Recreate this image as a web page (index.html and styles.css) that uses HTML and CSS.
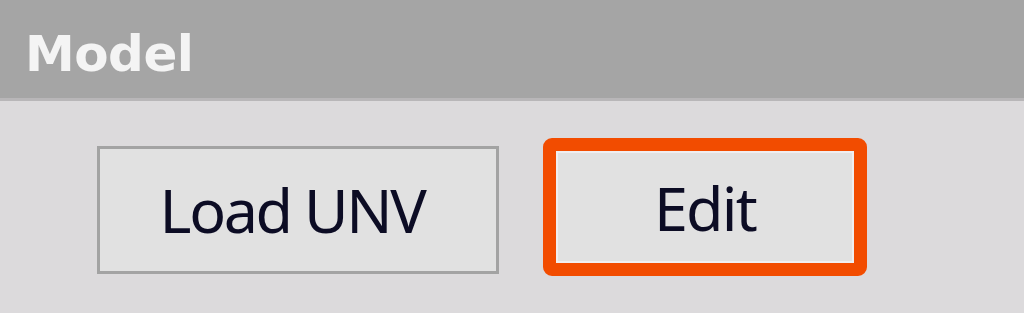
FILE: index.html
```html
<!DOCTYPE html>
<html>
<head>
<meta charset="utf-8">
<link rel="stylesheet" href="styles.css">
</head>
<body>
<div class="header"><span class="title">Model</span></div>
<div class="content">
  <button class="btn load">Load UNV</button>
  <div class="highlight"><button class="btn edit">Edit</button></div>
</div>
</body>
</html>
```
FILE: styles.css
```css
html, body {
  margin: 0;
  padding: 0;
  background: #dcdadc;
  width: 1024px;
  height: 313px;
  overflow: hidden;
}
.header {
  background: #a5a5a5;
  border-bottom: 3px solid #b8b6b8;
  padding-left: 25px;
  display: flex;
  align-items: center;
  box-sizing: border-box;
  height: 101px;
}
.title {
  font-family: "DejaVu Sans", sans-serif;
  font-weight: bold;
  font-size: 50px;
  color: #f4f4f4;
  margin-top: 10px;
  letter-spacing: -0.5px;
}
.content {
  display: flex;
  align-items: center;
  padding-left: 97px;
  padding-top: 37px;
  gap: 44px;
}
.btn {
  font-family: "Noto Sans", sans-serif;
  font-size: 61px;
  letter-spacing: -1.8px;
  color: #0c0c24;
  background: #e1e1e1;
  padding: 0;
  margin: 0;
  display: flex;
  align-items: center;
  justify-content: center;
  line-height: 1;
}
.load {
  width: 402px;
  height: 128px;
  border: 3px solid #a3a3a3;
  margin-top: 5px;
  letter-spacing: -2.4px;
  padding-right: 12px;
}
.highlight {
  border: 13px solid #f24c00;
  border-radius: 9px;
  background: #e1e1e1;
}
.edit {
  width: 298px;
  height: 112px;
  border: 2px solid #f0eef0;
}
```
